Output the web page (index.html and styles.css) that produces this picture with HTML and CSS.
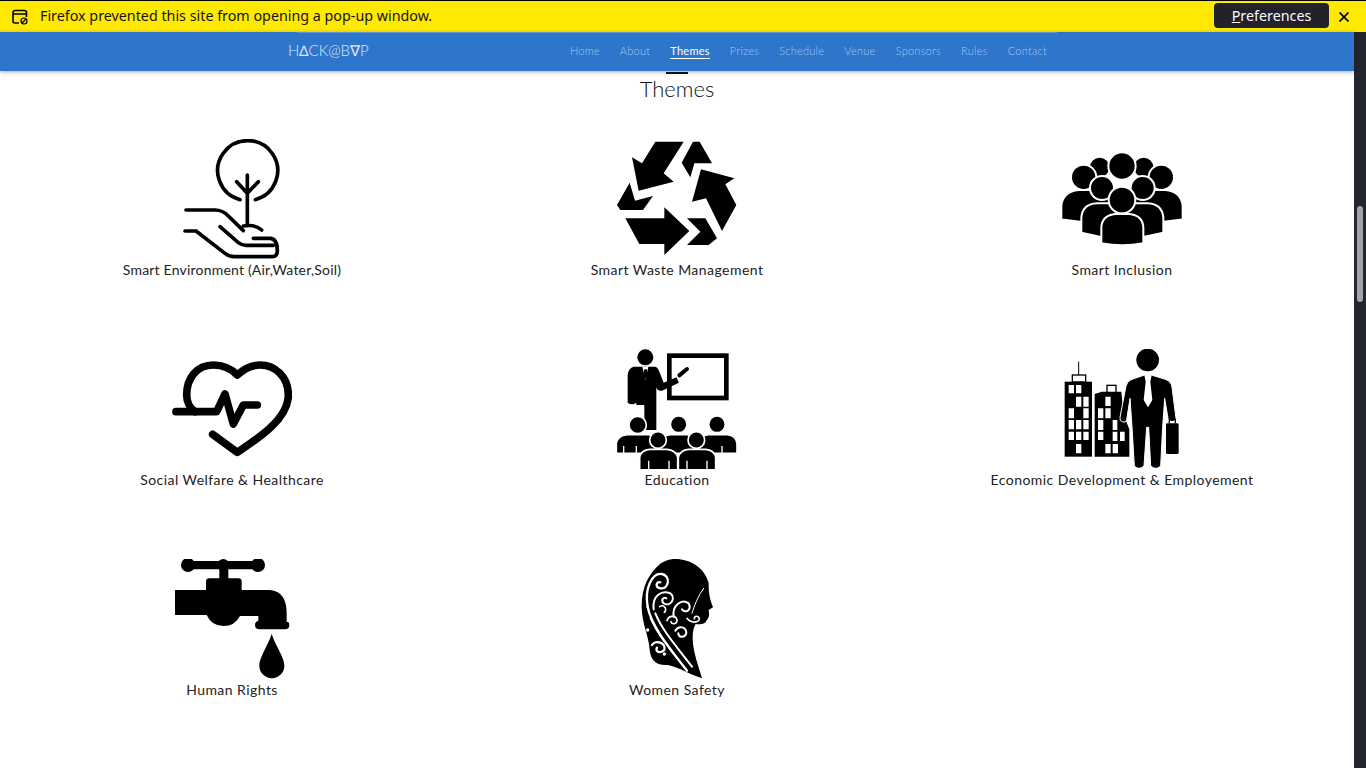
FILE: index.html
```html
<!DOCTYPE html>
<html>
  <head>
    <title>HackBVP - Themes</title>
    <link rel="stylesheet" href="styles.css">
  </head>

  <body>
    <div class="infobar">
      <svg class="infobar-icon" viewBox="0 0 16 16" width="16" height="16">
        <path d="M7 14H3a2 2 0 0 1-2-2V3.500a2 2 0 0 1 2-2h9.500a2 2 0 0 1 2 2V8M1 5h13.500" fill="none" stroke="#000" stroke-width="1.600"/>
        <circle cx="12" cy="12" r="3" fill="none" stroke="#000" stroke-width="1.200"/>
        <path d="M10 14l4-4" stroke="#000" stroke-width="1.200"/>
      </svg>
      <span class="infobar-text">Firefox prevented this site from opening a pop-up window.</span>
      <button class="prefs-btn"><u>P</u>references</button>
      <svg class="infobar-close" viewBox="0 0 10 10" width="10" height="10">
        <path d="M.5 .5l9 9M9.500 .5l-9 9" stroke="#000" stroke-width="1.700"/>
      </svg>
    </div>

    <div class="window">
      <div class="page">
        <header class="header">
          <div class="header-inner">
            <a class="logo">H∆CK@B∇P</a>
            <nav class="nav">
              <a href="#">Home</a>
              <a href="#">About</a>
              <a href="#" class="active">Themes</a>
              <a href="#">Prizes</a>
              <a href="#">Schedule</a>
              <a href="#">Venue</a>
              <a href="#">Sponsors</a>
              <a href="#">Rules</a>
              <a href="#">Contact</a>
            </nav>
          </div>
        </header>

        <section class="themes">
          <div class="title-mark"></div>
          <h2 class="title">Themes</h2>

          <div class="theme-grid">
            <div class="theme">
              <svg class="theme-icon" viewBox="36 27 360 360">
                <g fill="none" stroke="#000" stroke-width="11" stroke-linecap="round" stroke-linejoin="round">
                  <path d="M240 209A90 90 0 1 1 286 209"/>
                  <path d="M262 135V285M230 155L262 190L295 155"/>
                  <path d="M250 288Q285 282 305 300"/>
                  <path d="M78 240H165Q188 240 205 258L250 302"/>
                  <path d="M180 290L235 338Q245 346 258 346H340"/>
                  <path d="M75 303H108L195 370Q208 380 222 380H335Q352 380 352 362Q352 328 332 325H280"/>
                </g>
              </svg>
              <p class="theme-name tight">Smart Environment (Air,Water,Soil)</p>
            </div>

            <div class="theme">
              <svg class="theme-icon" viewBox="30 27 360 360">
                <path d="M145 35H230L170 130L200 155L95 182L75 82L105 100Z"/>
                <path d="M258 35H278L315 100H262L250 142L224 98Z"/>
                <path d="M282 118L382 145L355 163L388 225L345 303L297 205L255 215Z"/>
                <path d="M68 158L84 212L138 198L108 240H40L30 225Z"/>
                <path d="M55 265H172V232L247 303L172 375V342H97Z"/>
                <path d="M240 265H295L330 325L305 345H240L280 305Z"/>
              </svg>
              <p class="theme-name">Smart Waste Management</p>
            </div>

            <div class="theme">
              <svg class="theme-icon" viewBox="30 27 360 360">
                <g stroke="#fff" stroke-width="6">
                  <circle cx="143" cy="112" r="32"/>
                  <circle cx="275" cy="112" r="32"/>
                  <circle cx="210" cy="108" r="41"/>
                  <path d="M28 268V228Q32 184 80 180H340Q388 184 392 228V268L300 280H120Z"/>
                  <circle cx="95" cy="142" r="38"/>
                  <circle cx="328" cy="142" r="38"/>
                  <path d="M88 308V262Q92 222 135 220H287Q330 222 334 262V308L270 322H150Z"/>
                  <circle cx="150" cy="174" r="36"/>
                  <circle cx="272" cy="174" r="36"/>
                  <path d="M148 340V292Q150 256 190 252H232Q272 256 274 292V340Q210 352 148 340Z"/>
                  <circle cx="210" cy="210" r="40"/>
                </g>
              </svg>
              <p class="theme-name">Smart Inclusion</p>
            </div>

            <div class="theme">
              <svg class="theme-icon" viewBox="36 27 360 360">
                <g fill="none" stroke="#000" stroke-width="23" stroke-linecap="round" stroke-linejoin="round">
                  <path d="M158 283L232 337C300 292 385 235 385 165C385 110 345 75 300 75C270 75 248 90 232 105C215 88 190 75 160 75C110 75 80 115 80 165C80 185 90 205 105 215"/>
                  <path d="M48 215H170L195 162L220 252L250 195H292"/>
                </g>
              </svg>
              <p class="theme-name">Social Welfare &amp; Healthcare</p>
            </div>

            <div class="theme">
              <svg class="theme-icon" viewBox="30 27 360 360">
                <rect x="187" y="47" width="171" height="127" fill="none" stroke="#000" stroke-width="14"/>
                <path d="M217 106L240 87" stroke="#000" stroke-width="12" stroke-linecap="round"/>
                <circle cx="115" cy="52" r="24"/>
                <path d="M80 80H145Q152 82 157 95L170 128L208 112L216 128L165 152Q152 155 148 142V270H112V195H88V188Q74 198 62 188V105Q64 84 80 80Z"/>
                <path d="M106 80H124L116 120Z" fill="#fff"/>
                <path d="M112 88H120L123 108L116 116L109 108Z"/>
                <g stroke="#fff" stroke-width="5">
                  <circle cx="92" cy="255" r="26"/>
                  <circle cx="215" cy="253" r="25"/>
                  <circle cx="330" cy="253" r="25"/>
                  <path d="M28 340V308Q34 286 60 284H125Q150 288 150 310V340Z"/>
                  <path d="M160 340V308Q164 286 190 284H240Q264 288 268 310V340Z"/>
                  <path d="M275 340V308Q280 286 305 284H362Q388 288 390 310V340Z"/>
                  <circle cx="153" cy="300" r="25"/>
                  <circle cx="268" cy="300" r="25"/>
                  <path d="M98 392V352Q102 330 128 328H180Q206 330 212 352V392Z"/>
                  <path d="M214 392V352Q220 330 244 328H296Q322 330 326 352V392Z"/>
                </g>
                <path d="M50 318V340M88 318V340M125 362V387M186 362V387M240 362V387M300 362V387M345 318V340" stroke="#fff" stroke-width="4"/>
              </svg>
              <p class="theme-name">Education</p>
            </div>

            <div class="theme">
              <svg class="theme-icon" viewBox="30 27 360 360">
                <path d="M80 65V105" stroke="#000" stroke-width="3"/>
                <rect x="61" y="105" width="40" height="21" fill="#fff" stroke="#000" stroke-width="4"/>
                <rect x="165" y="136" width="27" height="22" fill="#fff" stroke="#000" stroke-width="4"/>
                <rect x="38" y="125" width="82" height="225"/>
                <path d="M128 162L150 155H208L215 225L232 268V350H128Z"/>
                <path fill="#fff" d="M50 135h16v25h-16zM72 135h16v25h-16zM72 170h16v30h-16zM94 170h16v30h-16zM50 205h16v30h-16zM94 205h16v30h-16zM50 240h16v28h-16zM72 240h16v28h-16zM94 240h16v28h-16zM50 275h16v25h-16zM72 275h16v25h-16zM94 275h16v25h-16zM72 312h16v28h-16z"/>
                <path fill="#fff" d="M160 170h16v28h-16zM138 205h16v30h-16zM160 205h16v30h-16zM138 240h16v30h-16zM182 240h14v30h-14zM138 275h16v25h-16zM182 275h14v28h-14zM204 275h14v28h-14zM160 312h16v28h-16zM182 312h16v28h-16z"/>
                <path d="M240 118L278 105H298L340 118Q358 124 360 142L372 235Q372 245 360 245Q350 245 348 235L338 175L332 260L326 378Q312 392 296 378L290 262H284L276 378Q260 392 247 378L240 260L234 175L224 240Q222 248 212 246Q202 244 204 232L222 138Q226 122 240 118Z" stroke="#fff" stroke-width="3"/>
                <circle cx="287" cy="60" r="34"/>
                <path d="M277 105H299L295 125L301 180L288 202L275 180L281 125Z" fill="#fff"/>
                <rect x="342" y="250" width="38" height="92" rx="4"/>
                <path d="M352 250V238H370V250" fill="none" stroke="#000" stroke-width="4"/>
              </svg>
              <p class="theme-name">Economic Development &amp; Employement</p>
            </div>

            <div class="theme">
              <svg class="theme-icon" viewBox="36 27 360 360">
                <path d="M82 33H295V58H82Z"/>
                <circle cx="84" cy="45" r="21"/>
                <circle cx="190" cy="45" r="18"/>
                <circle cx="294" cy="45" r="21"/>
                <rect x="178" y="45" width="27" height="45"/>
                <path d="M45 120H138V95Q138 85 148 85H235Q245 85 245 95V120H330Q380 125 380 190V215Q388 215 388 225Q388 238 375 238H300Q285 238 285 225Q285 215 295 212V198H240Q225 228 190 228Q155 228 140 195H45Z"/>
                <path d="M335 252C320 295 298 322 298 347A37.500 37.500 0 0 0 373 347C373 322 350 295 335 252Z"/>
              </svg>
              <p class="theme-name">Human Rights</p>
            </div>

            <div class="theme">
              <svg class="theme-icon" viewBox="30 27 360 360">
                <path d="M205 27C250 27 295 55 305 100C305 125 306 140 318 172L305 180C308 195 306 205 298 212C295 222 280 224 266 222C255 240 255 270 262 305C270 340 280 365 285 385C240 370 205 345 175 345C150 345 132 335 128 300C125 260 112 240 105 190C100 130 115 85 150 50C165 35 185 27 205 27Z"/>
                <g fill="none" stroke="#fff" stroke-linecap="round">
                  <path d="M122 170C112 115 135 68 165 72C192 78 186 118 160 115C143 112 148 93 160 97" stroke-width="7"/>
                  <path d="M122 170C132 225 180 285 240 362" stroke-width="7"/>
                  <path d="M140 178C135 135 165 120 190 130C208 145 190 172 170 160C160 150 170 140 178 145" stroke-width="6"/>
                  <path d="M145 190C165 240 205 285 255 350" stroke-width="6"/>
                  <path d="M200 200C195 165 225 145 245 160C255 180 235 192 225 178" stroke-width="6"/>
                  <path d="M180 212C185 195 207 195 210 210C210 224 195 224 192 215" stroke-width="5"/>
                  <path d="M205 242C215 225 238 230 238 250C234 264 215 264 214 250" stroke-width="6"/>
                  <path d="M158 170A11 11 0 1 1 172 187" stroke-width="5"/>
                  <path d="M255 190C262 165 275 135 290 115" stroke-width="3"/>
                  <path d="M240 205C250 220 278 220 277 205C273 195 262 198 262 206" stroke-width="5"/>
                  <path d="M135 285C145 268 178 278 172 300C160 312 143 305 150 293" stroke-width="7"/>
                  <path d="M130 205C150 250 175 280 210 325" stroke-width="4"/>
                </g>
                <circle cx="122" cy="240" r="5" fill="#fff"/>
                <circle cx="172" cy="312" r="5" fill="#fff"/>
              </svg>
              <p class="theme-name">Women Safety</p>
            </div>
          </div>
        </section>
      </div>

      <div class="scrollbar">
        <div class="scrollbar-thumb"></div>
      </div>
    </div>
  </body>
</html>
```

FILE: styles.css
```css
html,
body {
  margin: 0;
  height: 100%;
  overflow: hidden;
}

body {
  font-family: "Lato", sans-serif;
  background-color: white;
  display: flex;
  flex-direction: column;
}

/* browser notification bar */
.infobar {
  height: 31px;
  flex-shrink: 0;
  background-color: #ffe900;
  border-top: 1px solid #000;
  display: flex;
  align-items: center;
  padding: 0 15px 0 12px;
  font-family: "Noto Sans", sans-serif;
  font-size: 14.3px;
  color: #15141a;
}

.infobar-icon {
  margin-right: 12px;
}

.infobar-text {
  flex-grow: 1;
  margin-bottom: 2px;
}

.prefs-btn {
  width: 115px;
  height: 25px;
  margin: 0 10px 2px 0;
  padding: 0;
  background-color: #23222b;
  color: #fbfbfe;
  border: none;
  border-radius: 4px;
  font-family: "Noto Sans", sans-serif;
  font-size: 14.3px;
}

.infobar-close {
  margin-right: 2px;
}

.window {
  flex-grow: 1;
  display: flex;
  min-height: 0;
}

.page {
  flex-grow: 1;
  min-width: 0;
}

.scrollbar {
  width: 12px;
  background-color: #23252f;
  padding-top: 174px;
  box-sizing: border-box;
}

.scrollbar-thumb {
  width: 6px;
  height: 96px;
  margin-left: 3px;
  border-radius: 3px;
  background-color: #a3a3a6;
}

/* site header */
.header {
  height: 39px;
  background-color: #2e75cc;
  box-shadow: 0 1px 4px rgba(0, 0, 0, 0.35);
  position: relative;
}

.header-inner {
  width: 760px;
  height: 39px;
  margin: 0 auto;
  padding: 0 10px 2px 0;
  border-top: 1px solid #5c92d6;
  box-sizing: border-box;
  display: flex;
  justify-content: space-between;
  align-items: center;
}

.logo {
  margin: 0 0 1px -9px;
  color: #dce8f8;
  font-family: "Lato", sans-serif;
  font-weight: 300;
  font-size: 15px;
}

.nav {
  display: flex;
  gap: 20px;
}

.nav a {
  color: #a9c6ea;
  text-decoration: none;
  font-size: 11px;
  font-weight: 300;
  letter-spacing: 0.26px;
  padding-bottom: 1px;
  border-bottom: 1px solid transparent;
}

.nav a.active {
  color: white;
  font-weight: 400;
  border-bottom-color: white;
}

/* themes section */
.themes {
  text-align: center;
}

.title-mark {
  width: 22px;
  height: 2px;
  margin: 1px auto 0;
  background-color: #111;
}

.title {
  margin: 3px 0 0;
  height: 24px;
  line-height: 24px;
  font-size: 22px;
  font-weight: 300;
  color: #111;
}

.theme-grid {
  width: 1335px;
  margin: 38px auto 0;
  display: grid;
  grid-template-columns: repeat(3, 445px);
  row-gap: 68px;
}

.theme-icon {
  display: block;
  width: 120px;
  height: 120px;
  margin: 0 auto;
}

.theme-name {
  margin: 0;
  height: 22px;
  line-height: 22px;
  font-size: 14px;
  letter-spacing: 0.45px;
  color: #222;
}

.theme-name.tight {
  letter-spacing: 0.2px;
}
```
